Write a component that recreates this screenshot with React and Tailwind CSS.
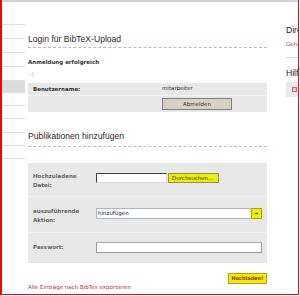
export default function App() {
  const side = [14, 14, 14, 14, 12, 13, 13, 14, 13, 14];
  const sans = { fontFamily: '"DejaVu Sans", Verdana, sans-serif' };
  return (
    <div className="w-[300px] h-[296px] bg-white overflow-hidden" style={sans}>
      <div className="w-[299px] h-[295px] border-l-2 border-l-[#ff0000] border-r border-r-[#e01010] border-b border-b-[#e01010] flex flex-col overflow-hidden">
        <div className="h-[2px] bg-[#c9d5e0] shrink-0" />
        <div className="flex flex-1">
          {/* left sidebar */}
          <div className="w-[23px] shrink-0 pt-[22px] flex flex-col">
            {side.map((h, i) => (
              <div
                key={i}
                className={
                  "border-t border-[#dedede] shrink-0 " +
                  (i === 4 ? "bg-[#dcdcdc]" : "") +
                  (i === side.length - 1 ? " border-b" : "")
                }
                style={{ height: h }}
              />
            ))}
          </div>

          {/* main */}
          <div className="w-[239px] shrink-0 ml-[3px] pt-[32px] flex flex-col">
            <div
              className="text-[8.6px] leading-[11px] text-[#2a2a2a] pb-[2px] border-b border-dashed border-[#e8a8b0]"
              style={{ fontFamily: '"Liberation Sans", Arial, sans-serif' }}
            >
              Login für BibTeX-Upload
            </div>
            <div className="mt-[10px] text-[5.5px] leading-[8px] font-bold text-[#333]">
              Anmeldung erfolgreich
            </div>
            <div className="mt-[4px] text-[5.5px] leading-[8px] text-[#aaa]">:-)</div>

            <div className="mt-[5px] bg-[#e8e8e8] flex flex-col">
              <div className="h-[12px] flex items-center">
                <div className="w-[134px] pl-[5px] text-[5.5px] font-bold text-[#333]">Benutzername:</div>
                <div className="text-[5.5px] text-[#333] -mt-[2px]">mitarbeiter</div>
              </div>
              <div className="h-px bg-[#f4f4f4]" />
              <div className="h-[16px] flex items-center">
                <div className="w-[134px]" />
                <div className="w-[70px] h-[12px] bg-[#d6d2ca] border border-[#808080] flex items-center justify-center text-[5.5px] text-[#333]">
                  Abmelden
                </div>
              </div>
            </div>

            <div
              className="mt-[19px] text-[8.6px] leading-[11px] text-[#2a2a2a] pb-[4px] border-b border-dashed border-[#e8a8b0]"
              style={{ fontFamily: '"Liberation Sans", Arial, sans-serif' }}
            >
              Publikationen hinzufügen
            </div>

            <div className="mt-[16px] bg-[#e8e8e8] flex flex-col">
              <div className="h-[33px] pt-[9px] flex items-start">
                <div className="w-[68px] shrink-0 pl-[5px] text-[5.5px] leading-[9px] font-bold text-[#666]">
                  Hochzuladene
                  <br />
                  Datei:
                </div>
                <div className="mt-[1px] flex">
                  <div className="w-[71px] h-[10px] bg-white border-t border-l border-t-[#404040] border-l-[#404040] border-b border-r border-b-[#d8d8d8] border-r-[#d8d8d8]" />
                  <div className="ml-[1px] w-[51px] h-[10px] bg-[#eeee00] border border-[#909060] flex items-center pl-[3px] text-[5.5px] text-[#333]">
                    Durchsuchen...
                  </div>
                </div>
              </div>
              <div className="h-px bg-[#f2f2f2]" />
              <div className="h-[35px] pt-[10px] flex items-start">
                <div className="w-[68px] shrink-0 pl-[5px] text-[5.5px] leading-[9px] font-bold text-[#666]">
                  auszuführende
                  <br />
                  Aktion:
                </div>
                <div className="mt-[1px] w-[166px] h-[11px] bg-white border border-[#a4b6c8] flex items-center justify-between">
                  <span className="pl-[1px] text-[5.5px] text-[#222]">hinzufügen</span>
                  <div className="w-[11px] h-[11px] -mr-px bg-[#eeee00] border border-[#a0a030] shadow-[0_0_2px_#ffff40] flex items-center justify-center">
                    <div className="w-[3px] h-[1px] bg-[#333]" />
                  </div>
                </div>
              </div>
              <div className="h-px bg-[#f2f2f2]" />
              <div className="h-[30px] pt-[9px] flex items-start">
                <div className="w-[68px] shrink-0 pl-[5px] mt-[1px] text-[5.5px] leading-[9px] font-bold text-[#666]">
                  Passwort:
                </div>
                <div className="w-[166px] h-[11px] bg-white border border-[#999] border-t-[#aaa]" />
              </div>
            </div>

            <div className="mt-[10px] flex justify-end">
              <div className="w-[39px] h-[11px] bg-[#eeee00] border border-[#a0a060] shadow-[0_0_2px_#ffff40] flex items-center justify-center text-[5px] font-bold text-[#a02800]">
                Hochladen!
              </div>
            </div>
            <div className="text-[5.5px] leading-[8px] text-[#c03030] -mt-[1px]">
              Alle Einträge nach BibTex exportieren
            </div>
          </div>

          {/* right column */}
          <div className="ml-[19px] flex-1 min-w-0 pt-[23px] flex flex-col overflow-hidden">
            <div
              className="text-[8.6px] leading-[11px] text-[#222] whitespace-nowrap"
              style={{ fontFamily: '"Liberation Sans", Arial, sans-serif' }}
            >
              Direkt
            </div>
            <div className="mt-[4px] text-[5.5px] leading-[8px] text-[#c04040] whitespace-nowrap">Gehe zu</div>
            <div className="mt-[9px] h-px bg-[#d8d8d8]" />
            <div
              className="mt-[10px] text-[8.6px] leading-[11px] text-[#222] whitespace-nowrap"
              style={{ fontFamily: '"Liberation Sans", Arial, sans-serif' }}
            >
              Hilfe
            </div>
            <div className="mt-[3px] h-[15px] w-[30px] bg-[#e6eaee] flex items-center pl-[6px]">
              <div className="w-[5px] h-[5px] bg-[#f4d0d0] border border-[#e06060]" />
            </div>
          </div>
        </div>
      </div>
    </div>
  );
}
